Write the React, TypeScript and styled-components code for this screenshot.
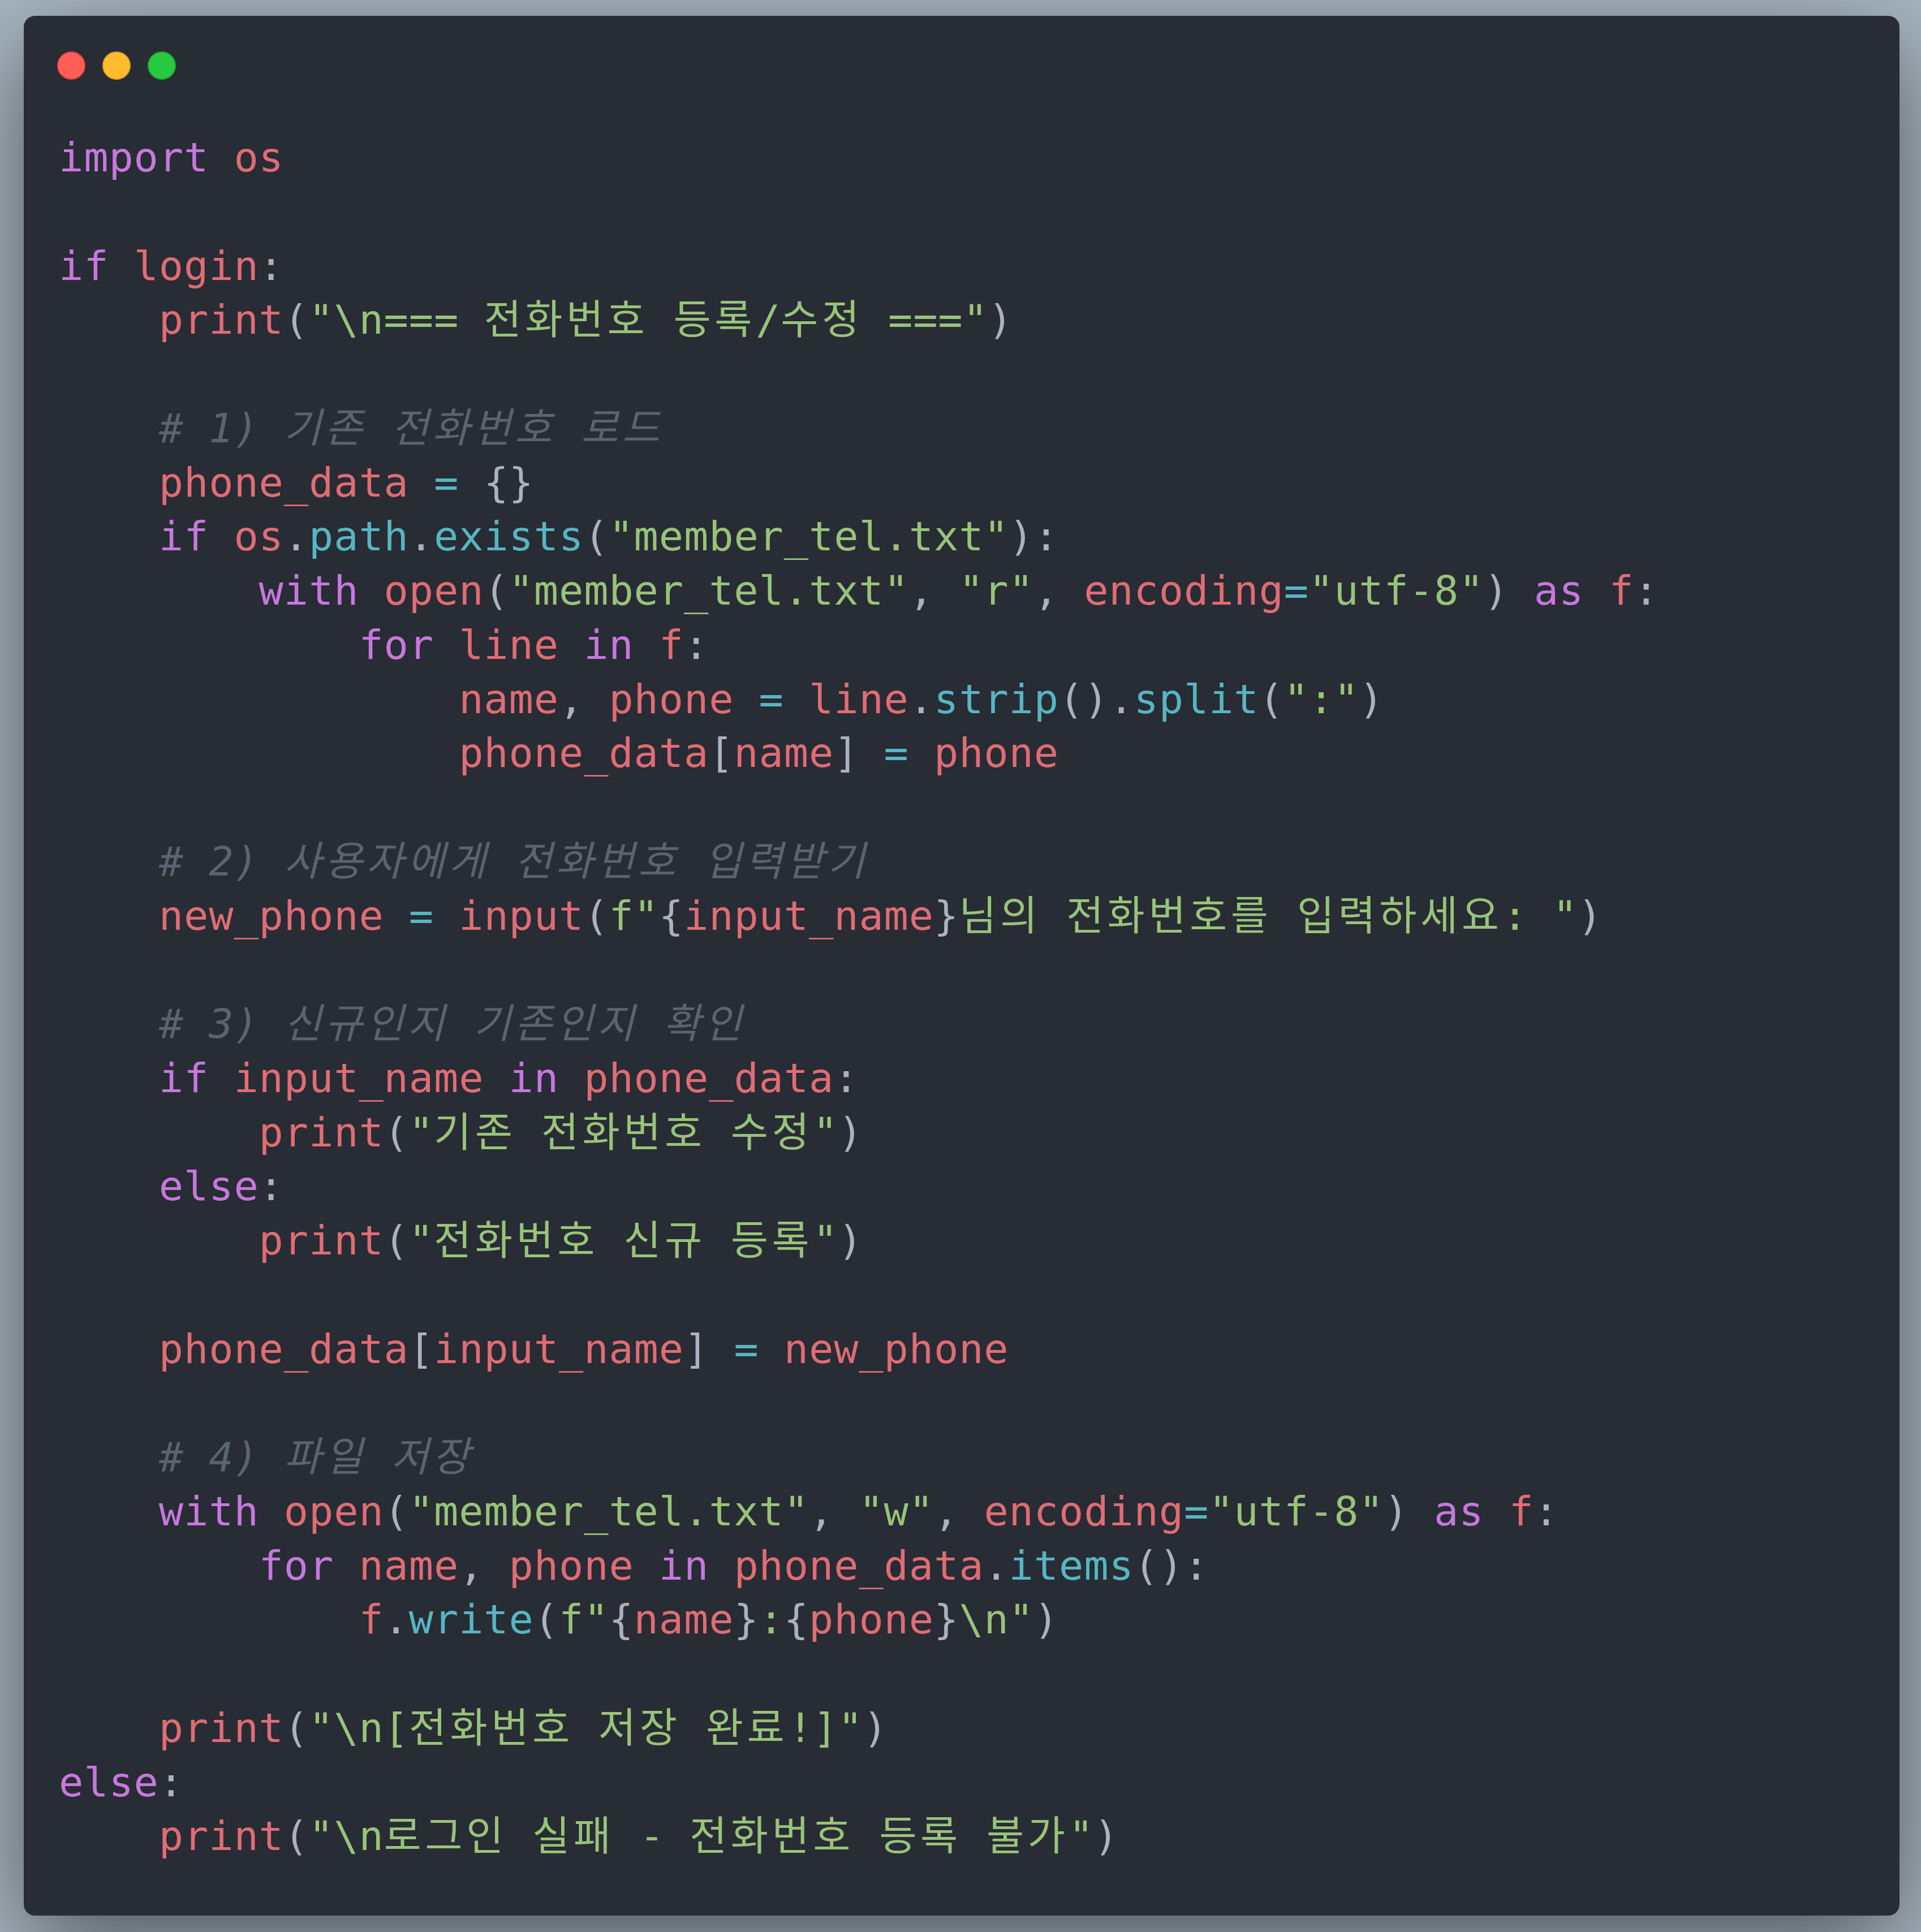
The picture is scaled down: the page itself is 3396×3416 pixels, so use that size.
import React from "react";
import styled, { createGlobalStyle } from "styled-components";

const Global = createGlobalStyle`
  html, body { margin: 0; padding: 0; background: #abb8c3; }
  #root { min-height: 100vh; }
`;

type Kind = "k" | "v" | "m" | "p" | "o" | "s" | "c" | "t";

const colors: Record<Kind, string> = {
  k: "#c678dd",
  v: "#e06c75",
  m: "#56b6c2",
  p: "#abb2bf",
  o: "#56b6c2",
  s: "#98c379",
  c: "#5c6370",
  t: "#abb2bf",
};

const Page = styled.div`
  box-sizing: border-box;
  min-height: 100vh;
  display: flex;
  padding: 28px 38px 29px 42px;
  background: #abb8c3;
`;

const Window = styled.div`
  flex: 1;
  display: flex;
  flex-direction: column;
  gap: 90px;
  padding: 63px 40px 91px 59px;
  background: #282c34;
  border-radius: 20px;
  box-shadow: 0 50px 180px rgba(0, 0, 0, 0.55);
`;

const Controls = styled.div`
  display: flex;
  gap: 30px;
  height: 50px;
`;

const Dot = styled.span<{ $fill: string; $edge: string }>`
  width: 50px;
  height: 50px;
  box-sizing: border-box;
  border-radius: 50%;
  background: ${(p) => p.$fill};
  border: 2px solid ${(p) => p.$edge};
`;

const Code = styled.div`
  padding-left: 3px;
  font-family: "DejaVu Sans Mono", "Noto Sans CJK KR", monospace;
  font-size: 72px;
  letter-spacing: 0.85px;
  color: #abb2bf;
`;

const Line = styled.div`
  height: 95.76px;
  line-height: 95.76px;
  white-space: pre;
`;

const Tok = styled.span<{ $t: Kind }>`
  color: ${(p) => colors[p.$t]};
  font-style: ${(p) => (p.$t === "c" ? "italic" : "normal")};
`;

const Hangul = styled.span`
  letter-spacing: 6.5px;
`;

type T = [Kind, string];

const I4 = "    ";
const I8 = "        ";
const I12 = "            ";
const I16 = "                ";

const lines: T[][] = [
  [["k", "import"], ["t", " "], ["v", "os"]],
  [],
  [["k", "if"], ["t", " "], ["v", "login"], ["p", ":"]],
  [["t", I4], ["v", "print"], ["p", "("], ["s", "\"\\n=== 전화번호 등록/수정 ===\""], ["p", ")"]],
  [],
  [["t", I4], ["c", "# 1) 기존 전화번호 로드"]],
  [["t", I4], ["v", "phone_data"], ["t", " "], ["o", "="], ["t", " "], ["p", "{}"]],
  [["t", I4], ["k", "if"], ["t", " "], ["v", "os"], ["p", "."], ["m", "path"], ["p", "."], ["m", "exists"], ["p", "("], ["s", "\"member_tel.txt\""], ["p", "):"]],
  [["t", I8], ["k", "with"], ["t", " "], ["v", "open"], ["p", "("], ["s", "\"member_tel.txt\""], ["p", ", "], ["s", "\"r\""], ["p", ", "], ["v", "encoding"], ["o", "="], ["s", "\"utf-8\""], ["p", ")"], ["t", " "], ["k", "as"], ["t", " "], ["v", "f"], ["p", ":"]],
  [["t", I12], ["k", "for"], ["t", " "], ["v", "line"], ["t", " "], ["k", "in"], ["t", " "], ["v", "f"], ["p", ":"]],
  [["t", I16], ["v", "name"], ["p", ", "], ["v", "phone"], ["t", " "], ["o", "="], ["t", " "], ["v", "line"], ["p", "."], ["m", "strip"], ["p", "()."], ["m", "split"], ["p", "("], ["s", "\":\""], ["p", ")"]],
  [["t", I16], ["v", "phone_data"], ["p", "["], ["v", "name"], ["p", "]"], ["t", " "], ["o", "="], ["t", " "], ["v", "phone"]],
  [],
  [["t", I4], ["c", "# 2) 사용자에게 전화번호 입력받기"]],
  [["t", I4], ["v", "new_phone"], ["t", " "], ["o", "="], ["t", " "], ["v", "input"], ["p", "("], ["s", "f\""], ["p", "{"], ["v", "input_name"], ["p", "}"], ["s", "님의 전화번호를 입력하세요: \""], ["p", ")"]],
  [],
  [["t", I4], ["c", "# 3) 신규인지 기존인지 확인"]],
  [["t", I4], ["k", "if"], ["t", " "], ["v", "input_name"], ["t", " "], ["k", "in"], ["t", " "], ["v", "phone_data"], ["p", ":"]],
  [["t", I8], ["v", "print"], ["p", "("], ["s", "\"기존 전화번호 수정\""], ["p", ")"]],
  [["t", I4], ["k", "else"], ["p", ":"]],
  [["t", I8], ["v", "print"], ["p", "("], ["s", "\"전화번호 신규 등록\""], ["p", ")"]],
  [],
  [["t", I4], ["v", "phone_data"], ["p", "["], ["v", "input_name"], ["p", "]"], ["t", " "], ["o", "="], ["t", " "], ["v", "new_phone"]],
  [],
  [["t", I4], ["c", "# 4) 파일 저장"]],
  [["t", I4], ["k", "with"], ["t", " "], ["v", "open"], ["p", "("], ["s", "\"member_tel.txt\""], ["p", ", "], ["s", "\"w\""], ["p", ", "], ["v", "encoding"], ["o", "="], ["s", "\"utf-8\""], ["p", ")"], ["t", " "], ["k", "as"], ["t", " "], ["v", "f"], ["p", ":"]],
  [["t", I8], ["k", "for"], ["t", " "], ["v", "name"], ["p", ", "], ["v", "phone"], ["t", " "], ["k", "in"], ["t", " "], ["v", "phone_data"], ["p", "."], ["m", "items"], ["p", "():"]],
  [["t", I12], ["v", "f"], ["p", "."], ["m", "write"], ["p", "("], ["s", "f\""], ["p", "{"], ["v", "name"], ["p", "}"], ["s", ":"], ["p", "{"], ["v", "phone"], ["p", "}"], ["s", "\\n\""], ["p", ")"]],
  [],
  [["t", I4], ["v", "print"], ["p", "("], ["s", "\"\\n[전화번호 저장 완료!]\""], ["p", ")"]],
  [["k", "else"], ["p", ":"]],
  [["t", I4], ["v", "print"], ["p", "("], ["s", "\"\\n로그인 실패 - 전화번호 등록 불가\""], ["p", ")"]],
];

const HANGUL = /([\uAC00-\uD7A3\u3131-\u318E]+)/;

function renderText(text: string) {
  const parts = text.split(HANGUL);
  return parts.map((part, i) =>
    i % 2 === 1 ? <Hangul key={i}>{part}</Hangul> : part
  );
}

export default function App() {
  return (
    <>
      <Global />
      <Page>
        <Window>
          <Controls>
            <Dot $fill="#ff5f56" $edge="#e0443e" />
            <Dot $fill="#ffbd2e" $edge="#dea123" />
            <Dot $fill="#27c93f" $edge="#1aab29" />
          </Controls>
          <Code>
            {lines.map((toks, i) => (
              <Line key={i}>
                {toks.length === 0
                  ? " "
                  : toks.map(([t, text], j) => (
                      <Tok key={j} $t={t}>
                        {renderText(text)}
                      </Tok>
                    ))}
              </Line>
            ))}
          </Code>
        </Window>
      </Page>
    </>
  );
}
